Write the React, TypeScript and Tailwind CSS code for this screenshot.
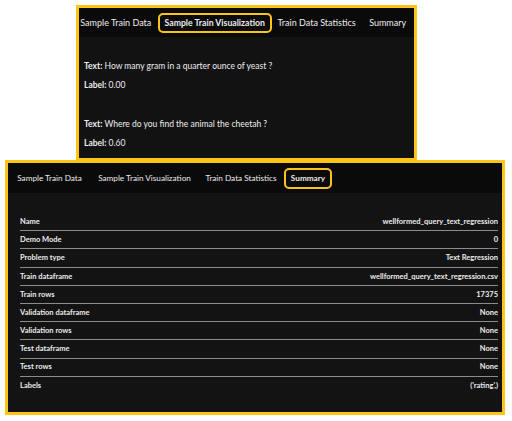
import React from 'react'

const font = { fontFamily: 'Lato, "Open Sans", sans-serif' }

const rows: [string, string][] = [
  ['Name', 'wellformed_query_text_regression'],
  ['Demo Mode', '0'],
  ['Problem type', 'Text Regression'],
  ['Train dataframe', 'wellformed_query_text_regression.csv'],
  ['Train rows', '17375'],
  ['Validation dataframe', 'None'],
  ['Validation rows', 'None'],
  ['Test dataframe', 'None'],
  ['Test rows', 'None'],
  ['Labels', "('rating',)"],
]

function Sample({ text, label }: { text: string; label: string }) {
  return (
    <div className="flex flex-col gap-[8px]">
      <p><span className="font-bold">Text:</span> {text}</p>
      <p><span className="font-bold">Label:</span> {label}</p>
    </div>
  )
}

export default function App() {
  return (
    <div className="w-[512px] h-[421px] bg-white pt-[5px] flex flex-col whitespace-nowrap" style={font}>
      {/* top panel: visualization tab */}
      <div className="ml-[76px] w-[341px] h-[156px] border-[3px] border-[#fcc419] bg-[#121212] flex flex-col text-[#ececec]">
        <div className="h-[29px] shrink-0 bg-[#0a0a0a] flex items-center text-[9px]">
          <div className="w-[79px] flex justify-center pr-[5px]">Sample Train Data</div>
          <div className="w-[115px] h-[20px] flex items-center justify-center border-2 border-[#fcc419] rounded-[5px] font-bold text-[8.7px]">
            Sample Train Visualization
          </div>
          <div className="w-[90px] flex justify-center">Train Data Statistics</div>
          <div className="w-[53px] flex justify-center">Summary</div>
        </div>
        <div className="flex flex-col gap-[28px] pl-[5px] pt-[24px] text-[8.5px] leading-[11px]">
          <Sample text="How many gram in a quarter ounce of yeast ?" label="0.00" />
          <Sample text="Where do you find the animal the cheetah ?" label="0.60" />
        </div>
      </div>

      {/* bottom panel: summary tab */}
      <div className="-mt-[1px] ml-[5px] w-[500px] h-[255px] border-[3px] border-[#fcc419] bg-[#131313] flex flex-col text-[#ececec]">
        <div className="h-[30px] shrink-0 bg-[#0a0a0a] flex items-center text-[8.2px]">
          <div className="w-[83px] flex justify-center">Sample Train Data</div>
          <div className="w-[107px] flex justify-center">Sample Train Visualization</div>
          <div className="w-[86px] flex justify-center">Train Data Statistics</div>
          <div className="w-[48px] h-[21px] flex items-center justify-center border-2 border-[#fcc419] rounded-[5px] font-bold">
            Summary
          </div>
        </div>
        <div className="flex flex-col pl-[12px] pr-[4px] pt-[20px] text-[7.5px] font-bold">
          {rows.map(([k, v], i) => (
            <div
              key={k}
              className={
                i < rows.length - 1
                  ? 'h-[18.2px] flex items-center justify-between border-b border-[#8c8c8c]'
                  : 'h-[18.2px] flex items-center justify-between'
              }
            >
              <span>{k}</span>
              <span>{v}</span>
            </div>
          ))}
        </div>
      </div>
    </div>
  )
}
